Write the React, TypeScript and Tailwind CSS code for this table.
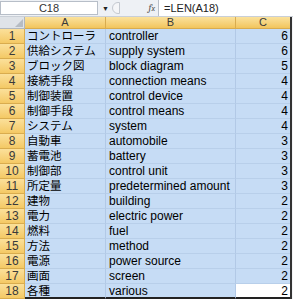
import React from "react";

const rows: [string, string, number][] = [
  ["コントローラ", "controller", 6],
  ["供給システム", "supply system", 6],
  ["ブロック図", "block diagram", 5],
  ["接続手段", "connection means", 4],
  ["制御装置", "control device", 4],
  ["制御手段", "control means", 4],
  ["システム", "system", 4],
  ["自動車", "automobile", 3],
  ["蓄電池", "battery", 3],
  ["制御部", "control unit", 3],
  ["所定量", "predetermined amount", 3],
  ["建物", "building", 2],
  ["電力", "electric power", 2],
  ["燃料", "fuel", 2],
  ["方法", "method", 2],
  ["電源", "power source", 2],
  ["画面", "screen", 2],
  ["各種", "various", 2],
];

const font = { fontFamily: '"Liberation Sans", Arial, "Noto Sans CJK JP", sans-serif' };
const jp = { fontFamily: '"Noto Sans CJK JP", "Liberation Sans", sans-serif' };

export default function App() {
  return (
    <div className="w-[293px] h-[300px] overflow-hidden bg-white text-black" style={font}>
      {/* formula bar */}
      <div className="flex h-[17px] items-center bg-[#eef1f5] border-b border-[#c9cfd7]">
        <div className="flex h-[14px] w-[98px] items-center justify-center border border-[#b7bec8] bg-white text-[11px] leading-none text-[#333]">
          C18
        </div>
        <div className="ml-[4px] text-[7px] leading-none text-[#222]">▼</div>
        <div className="ml-[3px] h-[12px] w-[8px] rounded-l-full border border-[#c4c9d0] bg-[#f5f6f8]" />
        <div className="flex-1" />
        <div className="mr-[3px] font-serif text-[10px] italic leading-none text-[#555]">
          f<span className="text-[8px]">x</span>
        </div>
        <div className="flex h-[16px] w-[135px] items-center border-l border-[#b7bec8] bg-white pl-[5px] text-[11px] leading-none text-[#222]">
          =LEN(A18)
        </div>
      </div>
      {/* column headers */}
      <div className="flex h-[12px] text-[11px] leading-none text-[#3a3a3a]">
        <div className="relative w-[25px] border-b border-r border-[#b0b6bd] bg-[#dfe3e8]">
          <div
            className="absolute bottom-[1px] right-[1px] h-0 w-0"
            style={{ borderBottom: "8px solid #b6bcc3", borderLeft: "8px solid transparent" }}
          />
        </div>
        <div className="flex w-[81px] items-center justify-center border-b border-r border-[#d9ac4e] bg-gradient-to-b from-[#fbe29c] to-[#f2c55c]">A</div>
        <div className="flex w-[130px] items-center justify-center border-b border-r border-[#d9ac4e] bg-gradient-to-b from-[#fbe29c] to-[#f2c55c]">B</div>
        <div className="flex w-[54px] items-center justify-center border-b border-[#d9ac4e] bg-gradient-to-b from-[#fbe29c] to-[#f2c55c]">C</div>
        <div className="flex-1 border-l-2 border-[#333] bg-[#f3f4f6]" />
      </div>
      {/* rows */}
      {rows.map(([a, b, c], i) => {
        const last = i === rows.length - 1;
        return (
          <div key={i} className="flex h-[15px] text-[12px] leading-none">
            <div className="flex w-[25px] items-center justify-center border-b border-r border-[#d9ac4e] bg-gradient-to-b from-[#fbe09a] to-[#f4c964] text-[#3a3a3a]">
              {i + 1}
            </div>
            <div
              className={`flex w-[81px] items-center whitespace-nowrap border-r border-[#b2c9e6] bg-[#c6dcf5] pl-[2px] text-[11.5px] ${last ? "border-b-2 border-b-[#222]" : "border-b border-b-[#b8cfea]"}`}
              style={jp}
            >
              {a}
            </div>
            <div
              className={`flex w-[130px] items-center whitespace-nowrap border-r border-[#b2c9e6] bg-[#c6dcf5] pl-[3px] ${last ? "border-b-2 border-b-[#222]" : "border-b border-b-[#b8cfea]"}`}
            >
              {b}
            </div>
            <div
              className={`flex w-[54px] items-center justify-end pr-[2px] ${last ? "border-b-2 border-b-[#222] bg-white" : "border-b border-b-[#b8cfea] bg-[#c6dcf5]"}`}
            >
              {c}
            </div>
            <div className="flex-1 border-l-2 border-[#333] bg-[#f3f4f6]" />
          </div>
        );
      })}
    </div>
  );
}
